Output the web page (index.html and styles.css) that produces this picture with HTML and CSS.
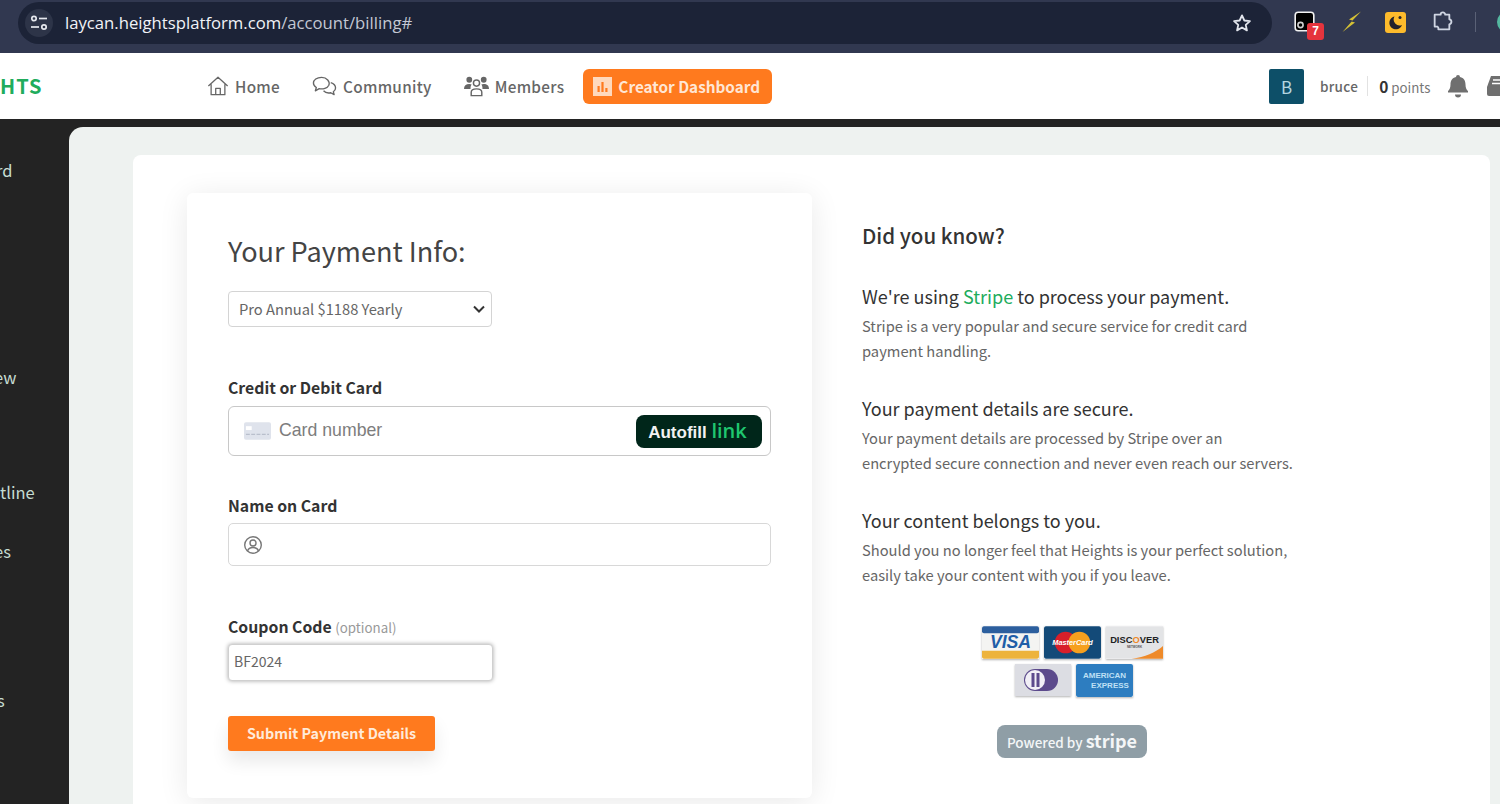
FILE: index.html
```html
<!DOCTYPE html>
<html lang="en">
<head>
    <meta charset="utf-8">
    <title>Billing</title>
    <link rel="stylesheet" href="styles.css">
</head>
<body>
    <div class="browser-bar">
        <div class="url-pill">
            <span class="site-btn">
                <svg width="18" height="16" viewBox="0 0 18 16" fill="none" stroke="#e6e8ee" stroke-width="1.7"><circle cx="4" cy="3.5" r="2.2"/><path d="M9 3.5h8"/><circle cx="14" cy="12" r="2.2"/><path d="M1 12h8"/></svg>
            </span>
            <span class="url"><span class="url-host">laycan.heightsplatform.com</span>/account/billing#</span>
            <svg class="star" width="20" height="20" viewBox="0 0 24 24" fill="none" stroke="#e2e5ec" stroke-width="2.2" stroke-linejoin="round"><path d="M12 2.8l2.8 6.2 6.7.7-5 4.5 1.4 6.6-5.9-3.4-5.9 3.4 1.4-6.6-5-4.5 6.7-.7z"/></svg>
        </div>
        <div class="ext-list">
            <span class="ext ext-cam">
                <svg width="22" height="22" viewBox="0 0 22 22"><rect x="1.2" y="1.2" width="18.6" height="18.6" rx="3" fill="#000" stroke="#f2f2f2" stroke-width="1.6"/><circle cx="6.5" cy="14" r="2.6" fill="none" stroke="#cfcfcf" stroke-width="1.6"/></svg>
                <span class="ext-badge">7</span>
            </span>
            <svg class="ext-bolt" width="20" height="22" viewBox="0 0 20 22"><path d="M19 .5L7 8.500l3.500 1L.5 21 13 11.500l-3.500-1z" fill="#d4c035"/></svg>
            <span class="ext-moon">
                <svg width="21" height="21" viewBox="0 0 21 21"><rect width="21" height="21" rx="3" fill="#fdbb2c"/><path d="M9.500 4.500a6.500 6.500 0 1 0 7.500 8.500 6 6 0 0 1-7.500-8.500z" fill="#23212b"/><circle cx="15" cy="5.500" r="1.500" fill="#23212b"/></svg>
            </span>
            <svg class="ext-puzzle" width="22" height="22" viewBox="0 0 24 24" fill="none" stroke="#cfd5e2" stroke-width="2" stroke-linejoin="round"><path d="M4 4h6.500a2.500 2.500 0 0 1 5 0H20v5a2.800 2.800 0 0 1 0 5.500V20H8a2.800 2.800 0 0 0-1-3H4z"/></svg>
            <span class="ext-divider"></span>
            <span class="ext-avatar"></span>
        </div>
    </div>

    <header class="site-header">
        <div class="logo">HTS</div>
        <nav class="main-nav">
            <a class="nav-link nav-home">
                <svg width="22" height="24" viewBox="0 0 24 24" fill="none" stroke="#666" stroke-width="1.4" stroke-linejoin="round"><path d="M1.500 12L12 2.500 22.500 12M4.500 10v11.500h15V10M9.500 21.500v-7h5v7"/></svg>
                Home
            </a>
            <a class="nav-link nav-community">
                <svg width="25" height="24" viewBox="0 0 26 24" fill="none" stroke="#666" stroke-width="1.4" stroke-linejoin="round"><path d="M10 3c-5 0-8.500 2.600-8.500 6 0 2 1.200 3.500 3 4.600L3.500 17l4-2.200c4 .8 8.500-.5 10-3.600C19 7.500 15.500 3 10 3z"/><path d="M19.500 8.500c3 1 5 3 5 5.500 0 1.600-.8 3-2.300 4l.8 3-3.500-2c-3 .6-6-.3-7.500-2"/></svg>
                Community
            </a>
            <a class="nav-link nav-members">
                <svg width="25" height="22" viewBox="0 0 26 22" fill="#666"><circle cx="5.500" cy="4.500" r="3"/><circle cx="20.500" cy="4.500" r="3"/><path d="M0 14c0-3.500 2-5 5.500-5 1 0 2 .2 2.500.5-.8 1-1.300 2.500-1.200 4.500z"/><path d="M26 14c0-3.500-2-5-5.500-5-1 0-2 .2-2.500.5.800 1 1.300 2.500 1.200 4.500z"/><circle cx="13" cy="8" r="3.200" fill="none" stroke="#666" stroke-width="1.500"/><path d="M7.500 21v-3.500c0-2.500 2-3.500 5.500-3.500s5.500 1 5.500 3.500V21z" fill="none" stroke="#666" stroke-width="1.500"/></svg>
                Members
            </a>
            <a class="creator-btn">
                <svg width="19" height="19" viewBox="0 0 19 19"><rect width="19" height="19" fill="#ffd9bd"/><path d="M4.500 9h2.200v6H4.500zM8.400 5h2.200v10H8.400zM12.300 11h2.200v4h-2.200z" fill="#ff7a1e"/></svg>
                Creator Dashboard
            </a>
        </nav>
        <div class="user-nav">
            <span class="user-avatar">B</span>
            <span class="user-name">bruce</span>
            <span class="user-points"><b>0</b> points</span>
            <svg class="bell" width="22" height="24" viewBox="0 0 22 24" fill="#6f6f6f"><path d="M11 1a2 2 0 0 1 2 2c4 .9 5.500 3.800 5.500 7.500 0 3.500 1 5.200 2.500 6.500v1.500H1V17c1.500-1.300 2.500-3 2.500-6.500C3.500 6.800 5 3.900 9 3a2 2 0 0 1 2-2z"/><path d="M8 20.500h6a3 3 0 0 1-6 0z"/></svg>
            <svg class="inbox" width="24" height="22" viewBox="0 0 24 22" fill="#6f6f6f"><path d="M5 1h19v20H3a2 2 0 0 1-2-2v-7z"/><path d="M7 5h15M6 8.500h16" stroke="#fff" stroke-width="1.600"/></svg>
        </div>
    </header>

    <div class="app-body">
        <aside class="sidebar">
            <div class="side-item side-1">rd</div>
            <div class="side-item side-2">ew</div>
            <div class="side-item side-3">tline</div>
            <div class="side-item side-4">es</div>
            <div class="side-item side-5">s</div>
        </aside>
        <main class="content">
            <section class="panel">
                <form class="pay-card">
                    <h1 class="pay-title">Your Payment Info:</h1>
                    <select class="plan-select">
                        <option>Pro Annual $1188 Yearly</option>
                    </select>

                    <label class="field-label label-card">Credit or Debit Card</label>
                    <div class="card-field">
                        <svg width="27" height="18" viewBox="0 0 28 18"><rect width="28" height="18" rx="2" fill="#dfe3ec"/><rect x="2" y="4" width="6" height="4" fill="#fff"/><path d="M2 12.500h24" stroke="#b9bfcc" stroke-width="1.500" stroke-dasharray="4 1.500"/></svg>
                        <input class="card-input" type="text" placeholder="Card number">
                        <span class="autofill">Autofill <span class="autofill-link">link</span></span>
                    </div>

                    <label class="field-label label-name">Name on Card</label>
                    <div class="name-field">
                        <svg width="20" height="20" viewBox="0 0 20 20" fill="none" stroke="#777" stroke-width="1.400"><circle cx="10" cy="10" r="8.300"/><circle cx="10" cy="8" r="3"/><path d="M4.500 16c.8-2.500 2.800-3.500 5.500-3.500s4.700 1 5.500 3.500"/></svg>
                        <input class="name-input" type="text">
                    </div>

                    <label class="field-label label-coupon">Coupon Code <span class="optional">(optional)</span></label>
                    <input class="coupon-input" type="text" value="BF2024">

                    <button class="submit-btn" type="button">Submit Payment Details</button>
                </form>

                <div class="info">
                    <h2 class="info-title">Did you know?</h2>
                    <h3 class="info-head">We're using <span class="green">Stripe</span> to process your payment.</h3>
                    <p class="info-text">Stripe is a very popular and secure service for credit card<br>payment handling.</p>
                    <h3 class="info-head">Your payment details are secure.</h3>
                    <p class="info-text">Your payment details are processed by Stripe over an<br>encrypted secure connection and never even reach our servers.</p>
                    <h3 class="info-head">Your content belongs to you.</h3>
                    <p class="info-text">Should you no longer feel that Heights is your perfect solution,<br>easily take your content with you if you leave.</p>

                    <div class="brands">
                        <div class="brand-row">
                            <svg class="brand" width="57" height="33" viewBox="0 0 58 33"><rect width="58" height="33" rx="2" fill="#f4f4f2"/><rect width="58" height="7" rx="2" fill="#2c5f9e"/><path d="M0 25h58v6a2 2 0 0 1-2 2H2a2 2 0 0 1-2-2z" fill="#edb33c"/><text class="visa-text" x="29" y="22.500" text-anchor="middle">VISA</text></svg>
                            <svg class="brand" width="57" height="33" viewBox="0 0 58 33"><rect width="58" height="33" rx="2" fill="#134a78"/><circle cx="22" cy="16.500" r="11" fill="#d81f2a"/><circle cx="36" cy="16.500" r="11" fill="#f6a01e"/><text class="mc-text" x="29" y="19" text-anchor="middle">MasterCard</text></svg>
                            <svg class="brand" width="57" height="33" viewBox="0 0 58 33"><rect width="58" height="33" fill="#e3e4e6"/><path d="M58 20v13H26c14-2 24-6 32-13z" fill="#ee8a2a"/><text class="disc-text" x="29" y="17" text-anchor="middle">DISC<tspan class="disc-o">O</tspan>VER</text><text class="disc-sub" x="29" y="22.500" text-anchor="middle">NETWORK</text></svg>
                        </div>
                        <div class="brand-row brand-row-low">
                            <svg class="brand" width="56" height="32" viewBox="0 0 56 32"><rect width="56" height="32" fill="#dcdde3"/><rect x="9" y="5" width="34" height="22" rx="11" fill="#5c4a8c"/><circle cx="20" cy="16" r="10" fill="#f1eff6"/><path d="M18 9v14M23 9v14" stroke="#5c4a8c" stroke-width="3"/></svg>
                            <svg class="brand" width="57" height="33" viewBox="0 0 57 33"><rect width="57" height="33" rx="2" fill="#2d7dc0"/><text class="amex-text" x="28.500" y="14" text-anchor="middle">AMERICAN</text><text class="amex-text" x="34" y="24" text-anchor="middle">EXPRESS</text></svg>
                        </div>
                    </div>
                    <div class="powered-row">
                        <span class="powered">Powered by <b class="powered-name">stripe</b></span>
                    </div>
                </div>
            </section>
        </main>
    </div>
</body>
</html>
```

FILE: styles.css
```css
* {
    box-sizing: border-box;
}

html, body {
    margin: 0;
    height: 804px;
    overflow: hidden;
}

body {
    font-family: "Noto Sans CJK SC", "Noto Sans", sans-serif;
    color: #333;
    background: #232323;
    display: flex;
    flex-direction: column;
}

/* browser chrome */
.browser-bar {
    height: 53px;
    flex: none;
    display: flex;
    align-items: flex-start;
    padding: 2px 0 0 18px;
    background: #313850;
    overflow: hidden;
}
.url-pill {
    width: 1254px;
    height: 42px;
    flex: none;
    display: flex;
    align-items: center;
    padding: 0 20px 0 7px;
    border-radius: 21px;
    background: #1c2337;
}
.site-btn {
    width: 28px;
    height: 28px;
    border-radius: 50%;
    background: #2d3448;
    display: flex;
    align-items: center;
    justify-content: center;
}
.url {
    margin: -2px 0 0 12px;
    font-family: "Open Sans", sans-serif;
    font-size: 16.700px;
    color: #c3c8d3;
    flex: 1;
}
.url-host {
    color: #f1f3f7;
}
.ext-list {
    display: flex;
    align-items: center;
    height: 42px;
    margin-left: 22px;
    flex: none;
}
.ext {
    position: relative;
    width: 22px;
    height: 22px;
    margin-top: -2px;
}
.ext-badge {
    position: absolute;
    right: -8px;
    bottom: -7px;
    width: 17px;
    height: 17px;
    border-radius: 3px;
    background: #e5343d;
    color: #fff;
    font-family: "Liberation Sans", sans-serif;
    font-size: 12px;
    font-weight: 700;
    line-height: 17px;
    text-align: center;
}
.ext-bolt {
    margin: -2px 0 0 26px;
}
.ext-moon {
    display: flex;
    margin: -2px 0 0 23px;
}
.ext-puzzle {
    margin: -2px 0 0 25px;
}
.ext-divider {
    width: 1px;
    height: 20px;
    margin: -2px 0 0 22px;
    background: #5a6176;
}
.ext-avatar {
    width: 22px;
    height: 22px;
    margin: -2px 0 0 21px;
    border-radius: 50%;
    background: #54b8a0;
    flex: none;
}

/* site header */
.site-header {
    height: 66px;
    flex: none;
    display: flex;
    align-items: center;
    background: #fff;
    overflow: hidden;
}
.logo {
    width: 207px;
    flex: none;
    margin-top: -2px;
    font-size: 20px;
    font-weight: 700;
    letter-spacing: 1px;
    color: #20ac5c;
}
.main-nav {
    display: flex;
    align-items: center;
    width: 565px;
    flex: none;
}
.nav-link {
    display: flex;
    align-items: center;
    font-size: 15.300px;
    font-weight: 500;
    letter-spacing: .3px;
    color: #666;
}
.nav-link svg {
    margin-right: 6px;
}
.nav-community {
    margin-left: 32px;
}
.nav-members {
    margin-left: 32px;
}
.creator-btn {
    display: flex;
    align-items: center;
    width: 189px;
    height: 35px;
    margin-left: 19px;
    padding-left: 10px;
    gap: 6px;
    border-radius: 6px;
    background: #ff7a1e;
    color: #ffe6d4;
    font-size: 15.300px;
    font-weight: 700;
    white-space: nowrap;
    flex: none;
}
.user-nav {
    display: flex;
    align-items: center;
    margin-left: 497px;
    flex: none;
}
.user-avatar {
    width: 35px;
    height: 35px;
    border-radius: 2px;
    background: #0d4f68;
    color: #b5d6e0;
    font-size: 17px;
    line-height: 35px;
    text-align: center;
}
.user-name {
    margin-left: 16px;
    padding-right: 9px;
    border-right: 1px solid #e2e2e2;
    font-size: 13.500px;
    font-weight: 500;
    letter-spacing: .3px;
    color: #666;
}
.user-points {
    margin-left: 11px;
    font-size: 13.300px;
    color: #777;
}
.user-points b {
    color: #333;
    font-size: 15.500px;
}
.bell {
    margin-left: 17px;
    flex: none;
}
.inbox {
    margin-left: 17px;
    flex: none;
}

/* page body */
.app-body {
    flex: 1;
    display: flex;
    padding-top: 8px;
    background: #232323;
    min-height: 0;
    overflow: hidden;
}
.sidebar {
    width: 69px;
    flex: none;
    display: flex;
    flex-direction: column;
    overflow: hidden;
    font-size: 16.500px;
    color: #c5dcd2;
}
.side-item {
    line-height: 24px;
}
.side-1 {
    margin: 31px 0 0 -4px;
}
.side-2 {
    margin: 183px 0 0 -6px;
}
.side-3 {
    margin-top: 91px;
}
.side-4 {
    margin: 35px 0 0 -6px;
}
.side-5 {
    margin: 125px 0 0 -3px;
}
.content {
    flex: 1;
    padding: 28px 10px 0 64px;
    border-top-left-radius: 14px;
    background: #eef2f0;
    min-width: 0;
}
.panel {
    display: flex;
    align-items: flex-start;
    height: 660px;
    padding: 38px 0 0 54px;
    border-radius: 8px;
    background: #fff;
}

/* payment form */
.pay-card {
    width: 625px;
    height: 605px;
    flex: none;
    padding: 40px 41px;
    border-radius: 6px;
    background: #fff;
    box-shadow: 0 4px 30px rgba(0, 0, 0, .09);
}
.pay-title {
    margin: 0;
    font-size: 27.100px;
    font-weight: 400;
    line-height: 36px;
    color: #444;
}
.plan-select {
    display: block;
    width: 264px;
    height: 36px;
    margin-top: 22px;
    padding: 0 10px 2px;
    border: 1px solid #d4d4d4;
    border-radius: 4px;
    background: #fff url("data:image/svg+xml,%3Csvg xmlns='http://www.w3.org/2000/svg' width='12' height='8'%3E%3Cpath d='M1 1.500l5 5 5-5' fill='none' stroke='%23333' stroke-width='2'/%3E%3C/svg%3E") no-repeat right 6px center;
    appearance: none;
    font-family: inherit;
    font-size: 14.700px;
    color: #666;
}
.field-label {
    display: block;
    font-size: 15.800px;
    font-weight: 700;
    line-height: 26px;
    color: #333;
}
.label-card {
    margin-top: 48px;
}
.label-name {
    margin-top: 37px;
}
.label-coupon {
    margin-top: 48px;
}
.optional {
    font-size: 13.300px;
    font-weight: 400;
    color: #999;
}
.card-field {
    display: flex;
    align-items: center;
    height: 50px;
    margin-top: 5px;
    padding: 0 8px 0 15px;
    border: 1px solid #c8c8c8;
    border-radius: 6px;
}
.card-input {
    flex: 1;
    min-width: 0;
    margin-left: 8px;
    padding: 0 0 2px;
    border: 0;
    outline: 0;
    font-family: "Liberation Sans", sans-serif;
    font-size: 17.700px;
}
.card-input::placeholder {
    color: #7d7d7d;
}
.autofill {
    display: block;
    width: 126px;
    height: 33px;
    padding-right: 3px;
    border-radius: 8px;
    background: #00261a;
    color: #f2f2f2;
    font-family: "Liberation Sans", sans-serif;
    font-size: 17px;
    font-weight: 700;
    line-height: 32px;
    text-align: center;
    white-space: nowrap;
}
.autofill-link {
    font-family: "Open Sans", sans-serif;
    font-size: 20px;
    font-weight: 600;
    color: #1fc66f;
}
.name-field {
    display: flex;
    align-items: center;
    height: 43px;
    margin-top: 4px;
    padding-left: 14px;
    border: 1px solid #d8d8d8;
    border-radius: 5px;
}
.name-input {
    flex: 1;
    min-width: 0;
    border: 0;
    outline: 0;
}
.coupon-input {
    display: block;
    width: 265px;
    height: 37px;
    margin-top: 3px;
    padding: 0 5px 3px;
    border: 1px solid #d0d0d0;
    border-radius: 4px;
    outline: 0;
    box-shadow: 0 0 4px rgba(0, 0, 0, .35);
    font-family: inherit;
    font-size: 14px;
    color: #666;
}
.submit-btn {
    display: block;
    width: 207px;
    height: 35px;
    margin-top: 35px;
    padding-bottom: 3px;
    border: 0;
    border-radius: 3px;
    background: #ff7a1e;
    box-shadow: 0 10px 18px rgba(0, 0, 0, .09);
    color: #ffead9;
    font-family: inherit;
    font-size: 14.300px;
    font-weight: 700;
}

/* right column */
.info {
    width: 470px;
    margin-left: 50px;
    flex: none;
}
.info-title {
    margin: 25px 0 0;
    font-size: 20.500px;
    font-weight: 500;
    line-height: 34px;
    color: #333;
}
.info-head {
    margin: 29px 0 0;
    font-size: 18px;
    font-weight: 400;
    line-height: 30px;
    color: #333;
}
.info-title + .info-head {
    margin-top: 29px;
}
.info-text {
    margin: 2px 0 0;
    font-size: 14.700px;
    line-height: 25.400px;
    color: #666;
}
.green {
    color: #20ac5c;
}
.brands {
    width: 420px;
    margin-top: 39px;
    display: flex;
    flex-direction: column;
    align-items: center;
    gap: 5px;
}
.brand-row {
    display: flex;
    gap: 5px;
}
.brand-row-low {
    padding-left: 3px;
}
.brand {
    box-shadow: 0 1px 2px rgba(0, 0, 0, .3);
}
.visa-text {
    font: italic 700 18px "Liberation Sans", sans-serif;
    fill: #1f5ea8;
}
.mc-text {
    font: italic 700 7.500px "Liberation Sans", sans-serif;
    fill: #fff;
}
.disc-text {
    font: 700 9.500px "Liberation Sans", sans-serif;
    fill: #222;
}
.disc-o {
    fill: #ee8a2a;
}
.disc-sub {
    font: 700 3px "Liberation Sans", sans-serif;
    fill: #555;
}
.amex-text {
    font: 700 8px "Liberation Sans", sans-serif;
    fill: #bfe0f5;
}
.powered-row {
    width: 420px;
    margin-top: 28px;
    display: flex;
    justify-content: center;
}
.powered {
    width: 150px;
    height: 33px;
    border-radius: 8px;
    background: #8f9ea6;
    color: #f4f6f7;
    font-size: 13.500px;
    font-weight: 500;
    line-height: 30px;
    text-align: center;
    white-space: nowrap;
}
.powered-name {
    font-size: 18px;
    font-weight: 700;
}
```
